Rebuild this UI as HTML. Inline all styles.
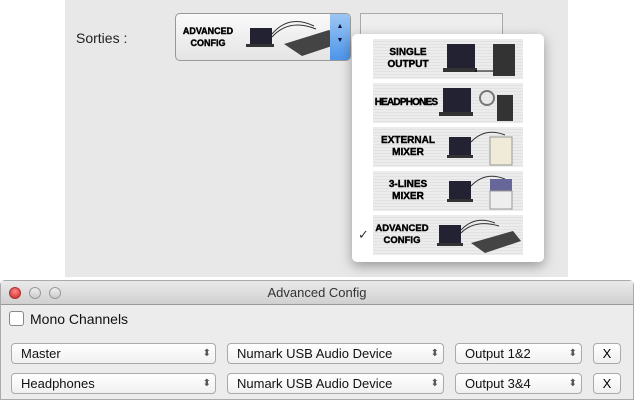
<!DOCTYPE html>
<html><head><style>
*{margin:0;padding:0;box-sizing:border-box}
body{width:634px;height:400px;background:#fff;position:relative;overflow:hidden;font-family:"Liberation Sans",sans-serif}
.abs{position:absolute}
.panel{left:65px;top:0;width:503px;height:277px;background:#e8e8e8}
.lbl{left:76px;top:30px;font-size:14px;color:#222}
.btn{left:175px;top:13px;width:176px;height:48px;border:1px solid #999;border-radius:5px;background:linear-gradient(#fafafa,#e4e4e4);overflow:hidden}
.arr{position:absolute;right:0;top:0;width:20px;height:46px;background:linear-gradient(#9cc6f3,#4d95ea);color:#113;font-size:7px;text-align:center;line-height:14px;padding-top:6px}
.box2{left:360px;top:13px;width:143px;height:40px;border:1px solid #aaa;background:#eee}
.menu{left:352px;top:34px;width:192px;height:228px;background:#fff;border-radius:5px;box-shadow:0 4px 12px rgba(0,0,0,.35)}
.it{position:absolute;left:21px;width:150px;height:40px;background:repeating-linear-gradient(#ececec 0 2px,#e2e2e2 2px 3px)}
.t{position:absolute;font-weight:bold;font-size:10px;text-align:center;line-height:12px;color:#000;-webkit-text-stroke:0.4px #000}
svg{position:absolute}
.win{left:0;top:280px;width:634px;height:120px;background:#ececec;border:1px solid #aaa;border-radius:5px 5px 0 0}
.tb{height:24px;background:linear-gradient(#eaeaea,#d0d0d0);border-bottom:1px solid #999;text-align:center;font-size:13px;line-height:24px;color:#333}
.dot{position:absolute;top:6px;width:12px;height:12px;border-radius:50%;border:1px solid #999;background:linear-gradient(#eee,#ccc)}
.pop{position:absolute;height:21px;border:1px solid #aaa;border-radius:4px;background:linear-gradient(#fff,#f0f0f0);font-size:13px;line-height:19px;padding-left:9px;color:#111}
.pop:after{content:"⬍";position:absolute;right:4px;top:0;font-size:10px;color:#555}
.x{position:absolute;width:28px;height:21px;border:1px solid #aaa;border-radius:4px;background:linear-gradient(#fff,#f0f0f0);font-size:13px;line-height:19px;text-align:center}
</style></head><body>
<div class="abs panel"></div>
<div class="abs lbl">Sorties :</div>
<div class="abs box2"></div>
<div class="abs btn">
 <div class="t" style="left:2px;top:11px;width:60px;font-size:9px">ADVANCED<br>CONFIG</div>
 <svg width="110" height="46" style="left:68px;top:0"><rect x="6" y="14" width="22" height="16" fill="#223"/><rect x="2" y="30" width="28" height="3" fill="#333"/><path d="M28 20 Q45 0 70 12 M28 23 Q45 4 72 15" stroke="#333" fill="none"/><polygon points="40,30 85,16 100,28 58,42" fill="#444"/></svg>
 <div class="arr">▲<br>▼</div>
</div>
<div class="abs menu">
 <div class="it" style="top:5px"><div class="t" style="left:3px;top:8px;width:64px">SINGLE<br>OUTPUT</div><svg width="80" height="40" style="left:68px;top:0"><rect x="6" y="5" width="28" height="24" fill="#223"/><rect x="2" y="29" width="34" height="4" fill="#333"/><path d="M34 32 H55" stroke="#000"/><rect x="52" y="5" width="22" height="32" fill="#333"/></svg></div>
 <div class="it" style="top:49px"><div class="t" style="left:0;top:14px;width:66px;font-size:10px;letter-spacing:-0.8px">HEADPHONES</div><svg width="80" height="40" style="left:64px;top:0"><rect x="6" y="5" width="28" height="24" fill="#223"/><rect x="2" y="29" width="34" height="4" fill="#333"/><circle cx="50" cy="15" r="7" fill="none" stroke="#777" stroke-width="2"/><rect x="60" y="12" width="16" height="26" fill="#333"/></svg></div>
 <div class="it" style="top:93px"><div class="t" style="left:1px;top:8px;width:68px">EXTERNAL<br>MIXER</div><svg width="80" height="40" style="left:72px;top:0"><rect x="4" y="10" width="22" height="18" fill="#223"/><rect x="2" y="28" width="26" height="3" fill="#333"/><path d="M26 15 Q40 0 60 8" stroke="#333" fill="none"/><rect x="45" y="10" width="22" height="28" fill="#f0ebd8" stroke="#999"/></svg></div>
 <div class="it" style="top:137px"><div class="t" style="left:3px;top:8px;width:64px">3-LINES<br>MIXER</div><svg width="80" height="40" style="left:72px;top:0"><rect x="4" y="10" width="22" height="18" fill="#223"/><rect x="2" y="28" width="26" height="3" fill="#333"/><path d="M26 15 Q40 0 60 8" stroke="#333" fill="none"/><rect x="45" y="8" width="22" height="12" fill="#669"/><rect x="45" y="20" width="22" height="18" fill="#eee" stroke="#999"/></svg></div>
 <div class="it" style="top:181px"><div class="t" style="left:-2px;top:8px;width:62px;font-size:9.5px">ADVANCED<br>CONFIG</div><svg width="90" height="40" style="left:62px;top:0"><rect x="4" y="10" width="22" height="18" fill="#223"/><rect x="2" y="28" width="26" height="3" fill="#333"/><path d="M26 15 Q40 0 60 8 M26 18 Q40 4 64 11" stroke="#333" fill="none"/><polygon points="36,28 78,16 86,26 50,38" fill="#444"/></svg></div>
 <div class="abs" style="left:6px;top:193px;font-size:13px;color:#333">✓</div>
</div>
<div class="abs win">
 <div class="tb">Advanced Config</div>
 <div class="dot" style="left:8px;background:radial-gradient(circle at 50% 35%,#f88,#c22);border-color:#a33"></div>
 <div class="dot" style="left:28px"></div>
 <div class="dot" style="left:48px"></div>
 <div class="abs" style="left:8px;top:30px;width:15px;height:15px;border:1px solid #888;border-radius:3px;background:#fff"></div>
 <div class="abs" style="left:29px;top:30px;font-size:14px;color:#111">Mono Channels</div>
 <div class="pop" style="left:10px;top:62px;width:205px">Master</div>
 <div class="pop" style="left:226px;top:62px;width:217px">Numark USB Audio Device</div>
 <div class="pop" style="left:454px;top:62px;width:127px">Output 1&amp;2</div>
 <div class="x" style="left:592px;top:62px">X</div>
 <div class="pop" style="left:10px;top:92px;width:205px">Headphones</div>
 <div class="pop" style="left:226px;top:92px;width:217px">Numark USB Audio Device</div>
 <div class="pop" style="left:454px;top:92px;width:127px">Output 3&amp;4</div>
 <div class="x" style="left:592px;top:92px">X</div>
</div>
</body></html>
